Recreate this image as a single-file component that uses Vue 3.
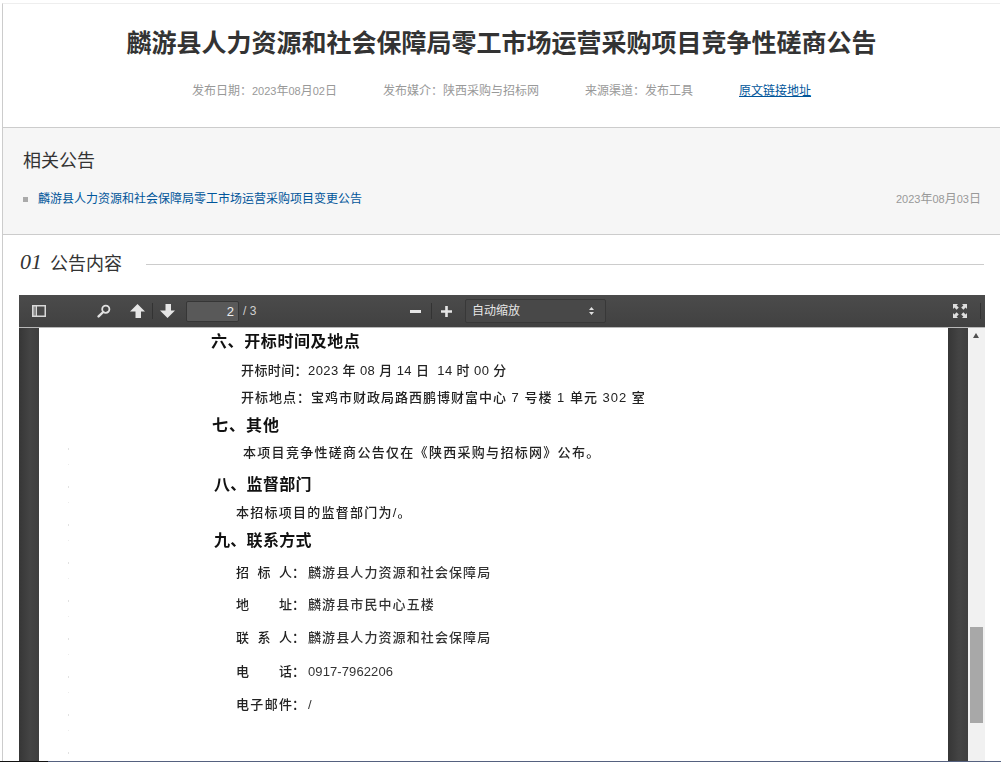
<script setup>
const headings = new Set(['h'])
const rows = [
  { kind: 'h', text: '六、开标时间及地点', left: 172, gap: 1, sp: 0.6 },
  { kind: 'p', text: '开标时间：2023 年 08 月 14 日  14 时 00 分', left: 202, gap: 9, sp: 0.4 },
  { kind: 'p', text: '开标地点：宝鸡市财政局路西鹏博财富中心 7 号楼 1 单元 302 室', left: 202, gap: 7, sp: 1 },
  { kind: 'h', text: '七、其他', left: 173, gap: 8, sp: 1 },
  { kind: 'p', text: '本项目竞争性磋商公告仅在《陕西采购与招标网》公布。', left: 204, gap: 7, sp: 1.3 },
  { kind: 'h', text: '八、监督部门', left: 175, gap: 12, sp: 0.3 },
  { kind: 'p', text: '本招标项目的监督部门为/。', left: 197, gap: 8, sp: 1.25 },
  { kind: 'h', text: '九、联系方式', left: 175, gap: 8, sp: 0.3 }
]
const contacts = [
  { label: '招标人', value: '麟游县人力资源和社会保障局', gap: 12, sp: 1.1 },
  { label: '地址', value: '麟游县市民中心五楼', gap: 12, sp: 1.1 },
  { label: '联系人', value: '麟游县人力资源和社会保障局', gap: 13, sp: 1.1 },
  { label: '电话', value: '0917-7962206', gap: 14, sp: 0.1 },
  { label: '电子邮件', value: '/', gap: 13, sp: 0 }
]
</script>

<template>
  <div class="screen">
    <main class="sheet">
      <header class="head">
        <h1 class="title">麟游县人力资源和社会保障局零工市场运营采购项目竞争性磋商公告</h1>
        <div class="meta">
          <span>发布日期：<i class="num">2023</i>年<i class="num">08</i>月<i class="num">02</i>日</span>
          <span>发布媒介：陕西采购与招标网</span>
          <span>来源渠道：发布工具</span>
          <a class="origin" href="#">原文链接地址</a>
        </div>
      </header>

      <section class="related">
        <h2 class="related-title">相关公告</h2>
        <div class="related-row">
          <span class="bullet"></span>
          <a class="related-link" href="#">麟游县人力资源和社会保障局零工市场运营采购项目变更公告</a>
          <span class="related-date"><i class="num">2023</i>年<i class="num">08</i>月<i class="num">03</i>日</span>
        </div>
      </section>

      <section class="content">
        <div class="content-head">
          <em class="index">01</em>
          <h2 class="content-title">公告内容</h2>
          <span class="rule"></span>
        </div>

        <div class="viewer">
          <div class="toolbar">
            <svg class="ic sidebar" width="14" height="12" viewBox="0 0 14 12">
              <path d="M0 0h14v12H0z" fill="#d8d8d8" />
              <path d="M5 1.5h7.5v9H5z" fill="#4a4a4a" />
              <path d="M1.5 1.5H4v9H1.5z" fill="#8c8c8c" />
            </svg>
            <svg class="ic search" width="14" height="14" viewBox="0 0 14 14">
              <circle cx="8.8" cy="5.2" r="3.6" fill="none" stroke="#e2e2e2" stroke-width="1.8" />
              <path d="M6.2 8 1.6 12.4" stroke="#e2e2e2" stroke-width="2.4" stroke-linecap="round" />
            </svg>
            <svg class="ic up" width="15" height="14" viewBox="0 0 15 14">
              <path d="M7.5 0 15 7.5h-4V14H5.5V7.5H0z" fill="#e6e6e6" />
            </svg>
            <span class="sep sep-nav"></span>
            <svg class="ic down" width="15" height="14" viewBox="0 0 15 14">
              <path d="M7.5 14 15 6.5h-4V0H5.5v6.500H0z" fill="#e6e6e6" />
            </svg>
            <div class="page-input">2</div>
            <span class="page-total">/ 3</span>
            <svg class="ic minus" width="11" height="3" viewBox="0 0 11 3">
              <path d="M0 0h11v3H0z" fill="#e6e6e6" />
            </svg>
            <span class="sep sep-zoom"></span>
            <svg class="ic plus" width="11" height="11" viewBox="0 0 11 11">
              <path d="M4.200 0h2.600v4.200H11v2.600H6.800V11H4.200V6.800H0V4.200h4.200z" fill="#e6e6e6" />
            </svg>
            <div class="zoom-select">
              <span>自动缩放</span>
              <svg width="5" height="8" viewBox="0 0 5 8">
                <path d="M2.500 0 5 3H0zM2.500 8 0 5h5z" fill="#e0e0e0" />
              </svg>
            </div>
            <svg class="ic full" width="14" height="14" viewBox="0 0 14 14">
              <path d="M0 0h5L3.600 1.400 5.800 3.600 3.600 5.800 1.400 3.600 0 5zM14 0v5l-1.400-1.400-2.200 2.200-2.200-2.200 2.200-2.200L9 0zM0 14V9l1.400 1.400 2.200-2.200 2.200 2.200-2.200 2.200L5 14zM14 14H9l1.400-1.400-2.200-2.200 2.200-2.200 2.200 2.200L14 9z" fill="#dedede" />
            </svg>
            <span class="sep sep-end"></span>
          </div>

          <div class="stage">
            <div class="gutter gutter-left"></div>
            <div class="page">
              <span class="specks"></span>
              <div
                v-for="row in rows"
                :key="row.text"
                class="scan-row"
                :class="{ heading: headings.has(row.kind) }"
                :style="{ marginTop: row.gap + 'px', marginLeft: row.left + 'px', letterSpacing: row.sp + 'px' }"
              >{{ row.text }}</div>
              <div
                v-for="c in contacts"
                :key="c.label + c.value"
                class="scan-row contact"
                :style="{ marginTop: c.gap + 'px' }"
              >
                <span class="contact-label">{{ c.label }}</span>
                <span class="contact-colon">：</span>
                <span class="contact-value" :style="{ letterSpacing: c.sp + 'px' }">{{ c.value }}</span>
              </div>
            </div>
            <div class="gutter gutter-right"></div>
            <div class="scrollbar">
              <span class="scroll-up"></span>
              <span class="scroll-thumb"></span>
            </div>
          </div>
        </div>
      </section>
    </main>
    <div class="edge">
      <span class="edge-start"></span>
      <span class="edge-rest"></span>
    </div>
  </div>
</template>

<style>
html, body { margin: 0; overflow: hidden; background: #fff; }
</style>

<style scoped>
.screen {
  width: 1001px;
  height: 762px;
  display: flex;
  flex-direction: column;
  overflow: hidden;
  font-family: "Liberation Sans", "Noto Sans CJK SC", sans-serif;
  font-size: 12px;
  color: #333;
}
.sheet {
  flex: 1;
  min-height: 0;
  overflow: hidden;
  margin: 3px 1px 0 2px;
  border-top: 1px solid #eee;
  border-left: 1px solid #ccc;
  display: flex;
  flex-direction: column;
}
.num { font-style: normal; font-size: 11px; }

.head {
  height: 123px;
  box-sizing: content-box;
  border-bottom: 1px solid #ccc;
}
.title {
  margin: 22px 0 0;
  height: 35px;
  line-height: 35px;
  text-align: center;
  font-size: 25px;
  font-weight: 700;
  color: #333;
}
.meta {
  margin-top: 20px;
  height: 20px;
  line-height: 20px;
  display: flex;
  justify-content: center;
  gap: 46px;
  color: #999;
}
.origin { color: #00559a; text-decoration: underline; }

.related {
  height: 106px;
  background: #f6f6f6;
  border-bottom: 1px solid #ccc;
}
.related-title {
  margin: 0;
  padding: 20px 0 0 20px;
  height: 26px;
  line-height: 26px;
  font-size: 18px;
  font-weight: 400;
  color: #333;
}
.related-row {
  margin-top: 15px;
  padding: 0 19px 0 20px;
  height: 20px;
  line-height: 20px;
  display: flex;
  align-items: center;
}
.bullet { width: 5px; height: 5px; background: #aaa; margin-right: 10px; }
.related-link { color: #00559a; text-decoration: none; }
.related-date { margin-left: auto; color: #999; }

.content { flex: 1; min-height: 0; padding: 0 15px 0 16px; }
.content-head {
  margin-top: 13px;
  height: 28px;
  display: flex;
  align-items: center;
}
.index {
  font-family: "Liberation Serif", serif;
  font-style: italic;
  font-size: 22px;
  color: #333;
  width: 31px;
  margin-left: 1px;
  margin-right: -1px;
}
.content-title {
  margin: 0;
  font-size: 18px;
  font-weight: 400;
  color: #333;
}
.rule {
  flex: 1;
  height: 1px;
  background: #ccc;
  margin: 5px 1px 0 24px;
}

.viewer { margin-top: 19px; display: flex; flex-direction: column; }
.toolbar {
  height: 32px;
  border-bottom: 1px solid #b8b8b8;
  background: linear-gradient(#4b4b4b, #414141);
  display: flex;
  align-items: center;
}
.ic { flex: none; }
.sidebar { margin-left: 13px; }
.search { margin-left: 51px; }
.up { margin-left: 19px; }
.sep { flex: none; width: 1px; height: 16px; background: #333; }
.sep-nav { margin-left: 7px; }
.down { margin-left: 7px; }
.page-input {
  margin-left: 11px;
  width: 53px;
  height: 21px;
  box-sizing: border-box;
  padding-right: 4px;
  line-height: 20px;
  text-align: right;
  font-size: 13px;
  color: #eee;
  background: #595959;
  border: 1px solid #363636;
  border-radius: 2px;
}
.page-total { margin-left: 4px; width: 20px; flex: none; font-size: 12px; color: #d0d0d0; }
.minus { margin-left: 147px; }
.sep-zoom { margin-left: 10px; }
.plus { margin-left: 9px; }
.zoom-select {
  margin-left: 13px;
  width: 141px;
  height: 24px;
  box-sizing: border-box;
  padding: 0 11px 0 6px;
  display: flex;
  align-items: center;
  justify-content: space-between;
  line-height: 20px;
  color: #e6e6e6;
  background: #484848;
  border: 1px solid #383838;
  border-radius: 2px;
}
.full { margin-left: 347px; }
.sep-end { margin-left: 13px; }

.stage { height: 434px; display: flex; overflow: hidden; }
.gutter { flex: none; width: 20px; background: linear-gradient(90deg, #363636, #444 55%, #3e3e3e); }
.page {
  flex: 1;
  position: relative;
  background: #fff;
  padding-top: 3px;
  overflow: hidden;
  font-size: 13px;
  font-weight: 500;
  line-height: 20px;
  color: #222;
  filter: blur(0.45px);
}
.specks {
  position: absolute;
  left: 29px;
  top: 120px;
  bottom: 0;
  width: 1px;
  background: repeating-linear-gradient(#e2e2e2 0 2px, #fff 2px 16px, #ececec 16px 17px, #fff 17px 38px);
}
.scan-row { white-space: pre; }
.scan-row.heading { font-size: 16px; font-weight: 700; color: #111; }
.contact { display: flex; margin-left: 197px; }
.contact-label { width: 56px; text-align-last: justify; }
.contact-colon { width: 16px; }
.contact-value { color: #333; }
.scrollbar { flex: none; width: 17px; background: #f1f1f1; position: relative; }
.scroll-up {
  position: absolute;
  left: 5px;
  top: 5px;
  border: 3.5px solid transparent;
  border-top: 0;
  border-bottom: 5px solid #505050;
}
.scroll-thumb {
  position: absolute;
  left: 2px;
  top: 299px;
  width: 13px;
  height: 96px;
  background: #a8a8a8;
}

.edge { flex: none; height: 1px; display: flex; }
.edge-start { width: 48px; background: #111; }
.edge-rest { flex: 1; background: #55617f; }
</style>
